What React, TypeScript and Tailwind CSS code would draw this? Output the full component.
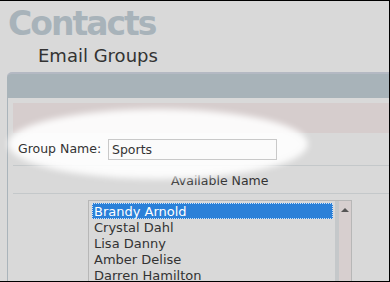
import React from 'react';

const names = ['Brandy Arnold', 'Crystal Dahl', 'Lisa Danny', 'Amber Delise', 'Darren Hamilton'];

export default function App() {
  return (
    <div
      className="relative w-[390px] h-[282px] overflow-hidden bg-[#d9d9d9] border-t border-r border-b border-black text-[#333]"
      style={{ fontFamily: '"DejaVu Sans", Verdana, sans-serif' }}
    >
      {/* highlight ellipse */}
      <div className="absolute left-[8px] top-[108px] w-[300px] h-[70px] rounded-[50%] bg-white/90 blur-[3px] z-10" />

      <div className="pl-[8px] pt-[8px]">
        <div className="text-[33px] leading-[30px] font-bold text-[#a8b3ba] tracking-[-2px]">
          Contacts
        </div>
        <div className="pl-[30px] mt-[6px] text-[18px] leading-[22px] text-[#333]">Email Groups</div>
      </div>

      <div className="ml-[7px] mt-[5px]">
        <div className="h-[26px] rounded-tl-[5px] bg-[#a8b3b9] border-t-2 border-[#b4b9c3]" />
        <div className="border-l border-[#aab4bb] pl-[5px] pt-[5px] h-[200px]">
          <div className="h-[30px] bg-[#d6cdcd]" />

          <div className="flex items-center h-[33px] border-b border-[#c4c8ca]">
            <span className="relative z-20 pl-[5px] w-[95px] text-[12.5px]">Group Name:</span>
            <div className="relative z-20 w-[169px] h-[21px] bg-[#fbfbfb] border border-[#c9c9c9] pl-[3px] text-[12.5px] leading-[19px]">
              Sports
            </div>
          </div>

          <div className="h-[28px] border-b border-[#c4c8ca] pl-[158px] pt-[7px] text-[12.5px] leading-[16px]">
            Available Name
          </div>

          <div className="ml-[75px] mt-[6px] w-[264px] h-[90px] flex border-t border-l border-[#b7b7b7] border-r">
            <div className="flex-1 pt-[2px] pl-[3px] pr-[2px]">
              {names.map((n, i) => (
                <div
                  key={n}
                  className={
                    i === 0
                      ? 'h-[16px] leading-[17px] pl-[2px] text-[13px] whitespace-nowrap bg-[#2b80d8] text-white outline-1 outline-dotted outline-[#cfe3f7] -outline-offset-1'
                      : 'h-[16px] leading-[17px] pl-[2px] text-[13px] whitespace-nowrap'
                  }
                >
                  {n}
                </div>
              ))}
            </div>
            <div className="w-[16px] flex">
              <div className="w-[4px] bg-[#c5c8ca]" />
              <div className="flex-1 bg-[#d7cfcf] flex justify-center pt-[6px]">
                <svg width="8" height="5" viewBox="0 0 8 5">
                  <path d="M0 5 L4 1 L8 5 Z" fill="#555" />
                </svg>
              </div>
            </div>
          </div>
        </div>
      </div>
    </div>
  );
}
